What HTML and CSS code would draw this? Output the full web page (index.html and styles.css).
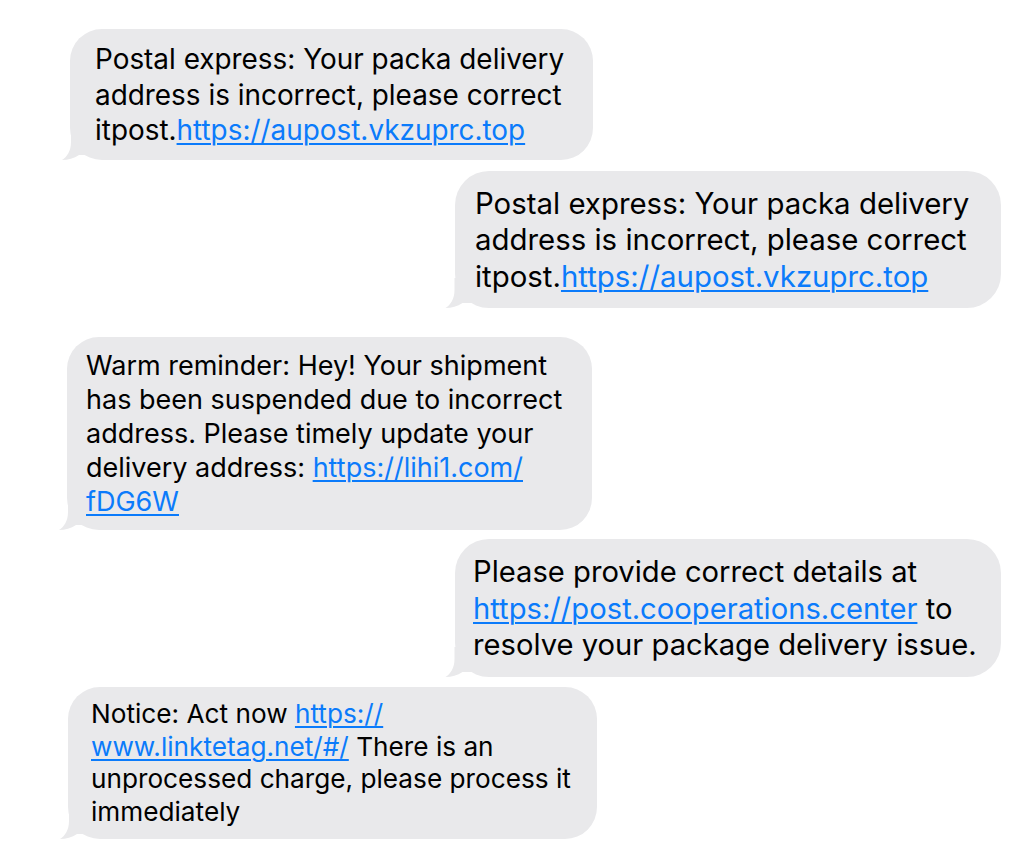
FILE: index.html
```html
<!DOCTYPE html>
<html lang="en">
<head>
<meta charset="utf-8">
<title>Messages</title>
<link rel="stylesheet" href="styles.css">
</head>
<body>
<main class="thread">
  <div class="bubble b1">
    <p class="text">Postal express: Your packa delivery<br>address is incorrect, please correct<br>itpost.<a class="link" href="#">https://aupost.vkzuprc.top</a></p>
    <svg class="tail" viewBox="0 0 30 30" aria-hidden="true"><path d="M9 0 L9 12 C9 21 5 27 0 30 C6 30 12 28.5 17 25 L30 25 L30 0 Z"/></svg>
  </div>
  <div class="bubble b2">
    <p class="text">Postal express: Your packa delivery<br>address is incorrect, please correct<br>itpost.<a class="link" href="#">https://aupost.vkzuprc.top</a></p>
    <svg class="tail tail-wide" viewBox="0 0 30 30" aria-hidden="true"><path d="M9 0 L9 12 C9 21 5 27 0 30 C6 30 12 28.5 17 25 L30 25 L30 0 Z"/></svg>
  </div>
  <div class="bubble b3">
    <p class="text">Warm reminder: Hey! Your shipment<br>has been suspended due to incorrect<br>address. Please timely update your<br>delivery address: <a class="link" href="#">https://lihi1.com/<br>fDG6W</a></p>
    <svg class="tail" viewBox="0 0 30 30" aria-hidden="true"><path d="M9 0 L9 12 C9 21 5 27 0 30 C6 30 12 28.5 17 25 L30 25 L30 0 Z"/></svg>
  </div>
  <div class="bubble b4">
    <p class="text">Please provide correct details at<br><a class="link" href="#">https://post.cooperations.center</a> to<br>resolve your package delivery issue.</p>
    <svg class="tail tail-wide" viewBox="0 0 30 30" aria-hidden="true"><path d="M9 0 L9 12 C9 21 5 27 0 30 C6 30 12 28.5 17 25 L30 25 L30 0 Z"/></svg>
  </div>
  <div class="bubble b5">
    <p class="text">Notice: Act now <a class="link" href="#">https://<br>www.linktetag.net/#/</a> There is an<br>unprocessed charge, please process it<br>immediately</p>
    <svg class="tail" viewBox="0 0 30 30" aria-hidden="true"><path d="M9 0 L9 12 C9 21 5 27 0 30 C6 30 12 28.5 17 25 L30 25 L30 0 Z"/></svg>
  </div>
</main>
</body>
</html>
```

FILE: styles.css
```css
* {
  box-sizing: border-box;
}

html, body {
  margin: 0;
  padding: 0;
  background: #ffffff;
}

body {
  width: 1024px;
  height: 858px;
  overflow: hidden;
  font-family: Inter, "Liberation Sans", Arial, sans-serif;
  color: #000000;
}

.thread {
  display: flex;
  flex-direction: column;
  align-items: flex-start;
  padding-top: 29px;
}

.bubble {
  position: relative;
  background: #e9e9eb;
  border-radius: 32px;
}

.text {
  margin: 0;
  white-space: nowrap;
  position: relative;
  z-index: 1;
}

.link {
  color: #0b7bfb;
  text-decoration: underline;
  text-decoration-thickness: 1.5px;
  text-underline-offset: 3px;
}

.tail {
  position: absolute;
  left: -8px;
  bottom: 0;
  width: 30px;
  height: 30px;
  fill: #e9e9eb;
}

.tail-wide {
  left: -11px;
  width: 33px;
}

.b1 {
  margin-left: 70px;
  width: 523px;
  padding: 13px 18px 11px 25px;
  font-size: 27.9px;
  line-height: 35.5px;
}

.b2 {
  align-self: flex-end;
  margin-top: 11px;
  margin-right: 23px;
  width: 546px;
  padding: 15px 16px 13px 20px;
  font-size: 29.4px;
  line-height: 36.5px;
  border-radius: 34px;
}

.b3 {
  margin-top: 29px;
  margin-left: 67px;
  width: 525px;
  padding: 12px 16px 11px 19px;
  font-size: 27px;
  line-height: 34px;
}

.b4 {
  align-self: flex-end;
  margin-top: 9px;
  margin-right: 23px;
  width: 546px;
  padding: 15px 16px 13px 18px;
  font-size: 29.2px;
  line-height: 36.5px;
  border-radius: 34px;
}

.b5 {
  margin-top: 10px;
  margin-left: 68px;
  width: 529px;
  padding: 11.5px 16px 10.5px 23px;
  font-size: 26.2px;
  line-height: 32.5px;
}
```
